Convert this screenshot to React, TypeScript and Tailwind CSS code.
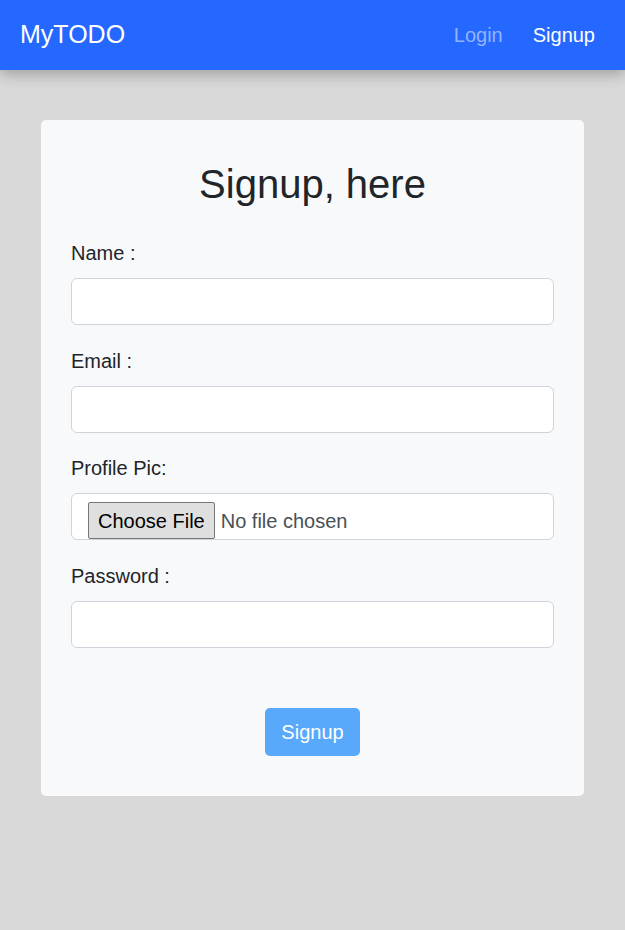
import React from 'react'

const fields = [
  { id: 'name', label: 'Name :', type: 'text' },
  { id: 'email', label: 'Email :', type: 'email' },
  { id: 'pic', label: 'Profile Pic:', type: 'file' },
  { id: 'password', label: 'Password :', type: 'password' }
]

function Navbar(): React.ReactElement {
  return (
    <nav className="relative z-10 flex h-[70px] items-center justify-between bg-[#2468ff] pl-[20px] pr-[30px] shadow-[0_4px_14px_rgba(0,0,0,0.28)]">
      <a href="#" className="text-[25px] text-white">
        MyTODO
      </a>
      <ul className="flex gap-[30px] text-[20px]">
        <li className="text-[#92b3ff]">
          <a href="#">Login</a>
        </li>
        <li className="text-white">
          <a href="#">Signup</a>
        </li>
      </ul>
    </nav>
  )
}

export default function App(): React.ReactElement {
  return (
    <div className="min-h-[930px] bg-[#d9d9d9] font-['Liberation_Sans',Arial,sans-serif] text-[#212529]">
      <Navbar />
      <main className="px-[41px] pt-[50px]">
        <form className="rounded-[5px] bg-[#f8f9fa] px-[30px] pb-[40px] pt-[40px]">
          <h2 className="mb-[30px] text-center text-[40px] leading-[48px]">Signup, here</h2>
          {fields.map((f) => (
            <div key={f.id} className="mb-[20.5px]">
              <label htmlFor={f.id} className="mb-[10px] block text-[20px] leading-[30px]">
                {f.label}
              </label>
              {f.type === 'file' ? (
                <div className="flex h-[47px] items-start rounded-[6px] border border-[#ced4da] bg-white px-[16px] pt-[8px]">
                  <input
                    id={f.id}
                    type="file"
                    className="text-[20px] text-[#495057] file:mr-[6px] file:h-[37px] file:rounded-[2px] file:border file:border-[#767676] file:bg-[#dfdfdf] file:px-[9px] file:text-[#000]"
                  />
                </div>
              ) : (
                <input
                  id={f.id}
                  type={f.type}
                  className="block h-[47px] w-full rounded-[6px] border border-[#ced4da] bg-white px-[12px] text-[18px]"
                />
              )}
            </div>
          ))}
          <div className="flex justify-center pt-[40px]">
            <button
              type="submit"
              className="h-[48px] w-[95px] rounded-[5px] bg-[#58a9fc] text-[20px] text-white"
            >
              Signup
            </button>
          </div>
        </form>
      </main>
    </div>
  )
}
